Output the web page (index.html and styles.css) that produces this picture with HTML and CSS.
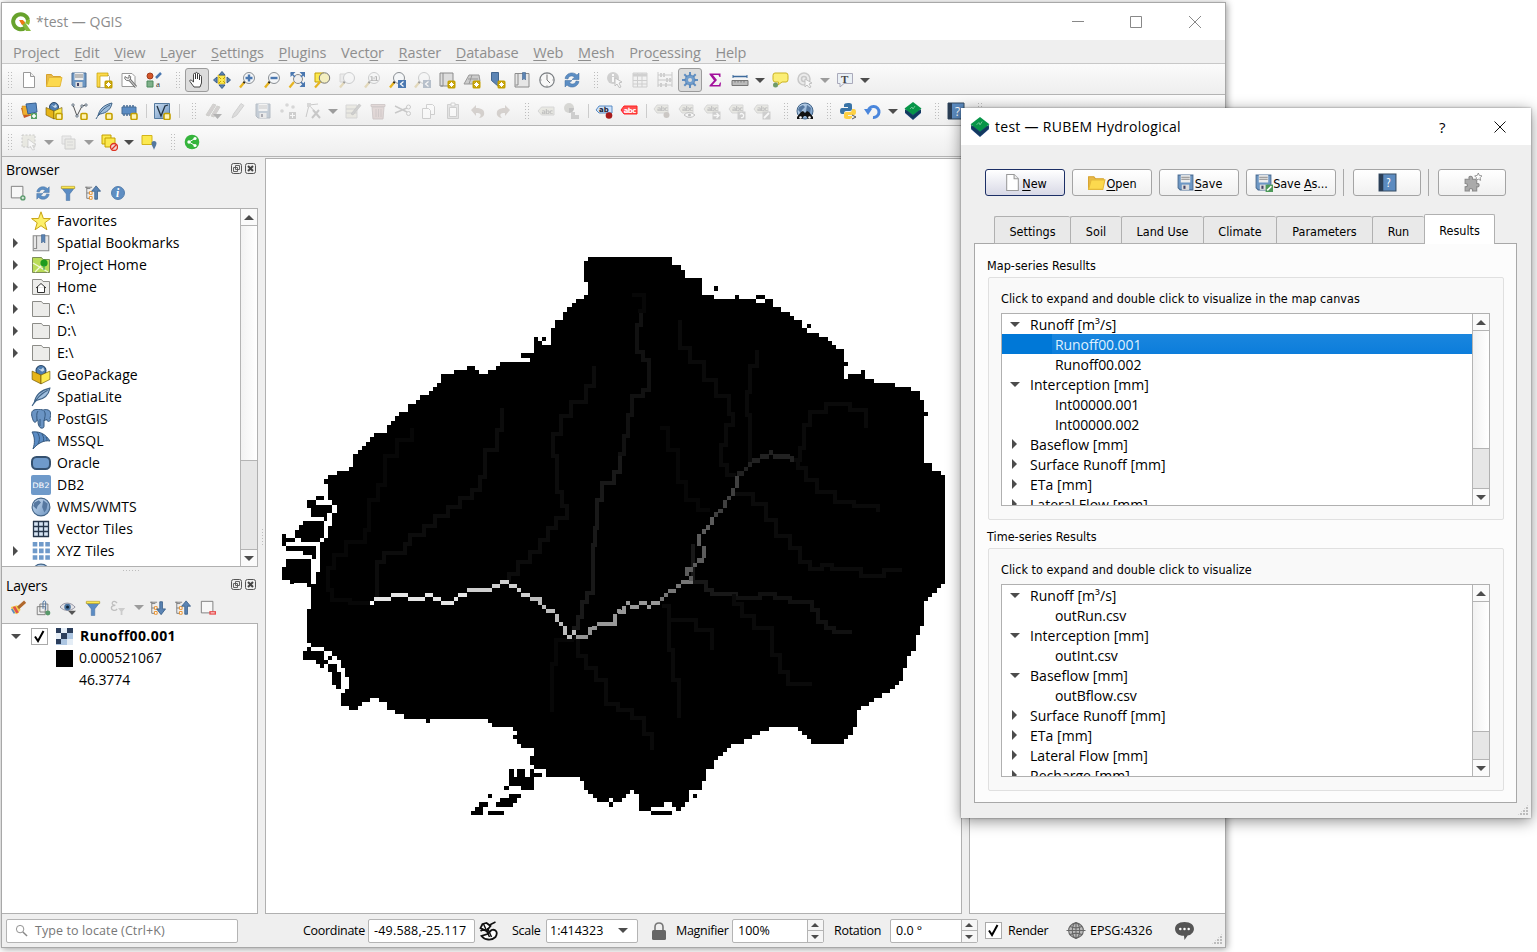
FILE: index.html
```
<!DOCTYPE html>
<html lang="en">
<head>
<meta charset="utf-8">
<title>*test — QGIS</title>
<link rel="stylesheet" href="styles.css">
</head>
<body>
<svg class="defs" aria-hidden="true">
<defs>
<linearGradient id="gl" x1="0" y1="0" x2="1" y2="1"><stop offset="0" stop-color="#c9dcf0"/><stop offset="1" stop-color="#6d94c0"/></linearGradient>
<symbol id="star" viewBox="0 0 18 18"><rect x="9.5" y="9.5" width="8" height="8" rx="1.5" fill="#c4a000"/><path d="M13.5 11v5M11 13.5h5M11.8 11.8l3.4 3.4M15.2 11.8l-3.4 3.4" stroke="#fff" stroke-width="1"/></symbol>
<symbol id="badge" viewBox="0 0 18 18"><rect x="11" y="11.500" width="6" height="6" rx="1.200" fill="#fff3b5" stroke="#c4a000" stroke-width="1.600"/></symbol>
<symbol id="new" viewBox="0 0 18 18"><path d="M3.500 1.500h7l4 4v11h-11z" fill="#fff" stroke="#999"/><path d="M10.500 1.500v4h4" fill="#eee" stroke="#999"/></symbol>
<symbol id="open" viewBox="0 0 18 18"><path d="M1.500 15.500V3.500h5l1.500 2h7.500v3" fill="#e8b94a" stroke="#d6a22c"/><path d="M1.500 15.500L4 6.500h13l-2 9z" fill="#fcd94e" stroke="#e4b93a"/></symbol>
<symbol id="save" viewBox="0 0 18 18"><path d="M2 2h14v14H4l-2-2z" fill="#6d97c4" stroke="#4d6f95"/><path d="M4.500 2h9v7h-9z" fill="#eee"/><path d="M5 4h8M5 6h8" stroke="#888"/><path d="M5.500 11h7v5h-7z" fill="#ddd"/><path d="M7 12h2v3H7z" fill="#446"/></symbol>
<symbol id="layout" viewBox="0 0 18 18"><path d="M2.500 2.500h9l3 3v11h-12z" fill="#fff" stroke="#aaa"/><path d="M2 2h11v3H5v11H2z" fill="#fcd94e" stroke="#c4a000" stroke-width=".7"/><use href="#star"/></symbol>
<symbol id="manager" viewBox="0 0 18 18"><path d="M2 2.500h10l3 3v10H2z" fill="#fff" stroke="#999"/><path d="M9 8l7 8" stroke="#777" stroke-width="2.800"/><path d="M9 8l7 8" stroke="#ddd" stroke-width="1"/><path d="M5 5.500a3 3 0 1 0 4-1.500L9 7H7z" fill="#eee" stroke="#777"/></symbol>
<symbol id="styles" viewBox="0 0 18 18"><circle cx="5" cy="5" r="3" fill="#d4572a" stroke="#a33c1c"/><path d="M11 7l5-5" stroke="#4a78b0" stroke-width="2.500"/><path d="M2 10h6v6H2z" fill="#7fb08a" stroke="#4c8a5c"/><text x="11" y="16" font-size="9" fill="#333" font-family="Liberation Serif">a</text></symbol>
<symbol id="hand" viewBox="0 0 18 18"><path d="M6 16L2 10.500c-.8-1.500.8-2 1.800-1L5.500 11V3.500c0-1.500 2-1.500 2 0V8 2.500c0-1.500 2-1.500 2 0V8 3.500c0-1.500 2-1.300 2 0V9 5.500c0-1.300 2-1.300 2 0V12l-1.500 4z" fill="#fff" stroke="#333" stroke-width=".9"/></symbol>
<symbol id="pansel" viewBox="0 0 18 18"><path d="M5 4h7v9H5z" fill="#fce94f" stroke="#c4a000" stroke-width=".6"/><path d="M9 .5l3 3.500H6zM9 17.500l3-3.500H6zM.5 9L4 6v6zM17.500 9L14 6v6z" fill="#5b84b4" stroke="#3c5f8a" stroke-width="1"/><path d="M6 6l2 2M12 6l-2 2M6 12l2-2M12 12l-2-2" stroke="#c4a000"/></symbol>
<symbol id="lens" viewBox="0 0 18 18"><path d="M6.500 11L2 16.500" stroke="#e6b422" stroke-width="2.400"/><path d="M8 9.500L5.500 12" stroke="#222" stroke-width="2"/><circle cx="11" cy="7" r="5.500" fill="#f4f6f8" stroke="#8a8f94"/></symbol>
<symbol id="zone" viewBox="0 0 18 18"><use href="#lens"/><text x="6.500" y="9.500" font-size="6.500" font-weight="bold" fill="#555" font-family="DejaVu Sans" textLength="9">1:1</text></symbol>
<symbol id="zin" viewBox="0 0 18 18"><use href="#lens"/><path d="M11 3.500v7M7.500 7h7" stroke="#4b78b0" stroke-width="2.400"/></symbol>
<symbol id="zout" viewBox="0 0 18 18"><use href="#lens"/><path d="M7.500 7h7" stroke="#4b78b0" stroke-width="2.400"/></symbol>
<symbol id="zfull" viewBox="0 0 18 18"><path d="M6 11L1.500 16.500" stroke="#e6b422" stroke-width="2.200"/><circle cx="10" cy="8" r="4.500" fill="#eee" stroke="#888"/><path d="M2.500 1h5L2.500 6zM17 1v5.500L11.500 1zM17 16v-5.500L11.500 16z" fill="#4b78b0"/><path d="M3 2l4 4M16.500 2L13 6M16.500 15L13 11" stroke="#4b78b0" stroke-width="1.500" fill="none"/></symbol>
<symbol id="zsel" viewBox="0 0 18 18"><path d="M2 2h9v9H2z" fill="#fce94f" stroke="#c4a000"/><path d="M7 11L2 16.500" stroke="#e6b422" stroke-width="2.200"/><circle cx="11.500" cy="7" r="5.200" fill="#f4efc0" stroke="#777"/></symbol>
<symbol id="zlay" viewBox="0 0 18 18"><path d="M2 3h9v8H2z" fill="#ddd" stroke="#aaa"/><use href="#lens"/></symbol>
<symbol id="zlast" viewBox="0 0 18 18"><use href="#lens"/><path d="M10 9h8v8h-8z" fill="#4b78b0"/><path d="M15.500 10.500L12.500 13l3 2.500" stroke="#fff" stroke-width="1.200" fill="none"/></symbol>
<symbol id="book3" viewBox="0 0 18 18"><path d="M2 2h3v13H2zM5 2h10v13H3" fill="#ddd" stroke="#8c8c8c"/><use href="#star"/></symbol>
<symbol id="v3d" viewBox="0 0 18 18"><path d="M1 13L6 4h10l1 6-5 3z" fill="#ccc" stroke="#999"/><path d="M5 8h10M9 4l-3 9" stroke="#999" fill="none"/><use href="#star"/></symbol>
<symbol id="bmk" viewBox="0 0 18 18"><path d="M3.500 1.500h7v14l-3.500-3-3.500-3z" fill="#5b84b4" stroke="#41658f"/><use href="#star"/></symbol>
<symbol id="bmks" viewBox="0 0 18 18"><path d="M2 2.500h14V16H2z" fill="#e6e6e6" stroke="#8c8c8c"/><path d="M5 2.500V14H2.500" stroke="#8c8c8c" fill="none"/><path d="M9.500 1.500h3V9L11 7.500 9.500 9z" fill="#5b84b4" stroke="#41658f" stroke-width=".6"/></symbol>
<symbol id="clock" viewBox="0 0 18 18"><circle cx="9" cy="9" r="7.200" fill="#f8f8f8" stroke="#7b7f83" stroke-width="1.200"/><path d="M9 4v5l3 3M9 2.500v1M9 14.500v1M2.500 9h1M14.500 9h1" stroke="#777" fill="none"/></symbol>
<symbol id="refresh" viewBox="0 0 18 18"><path d="M2 7.500C3 2 10 0 14 4l2-2v6.500h-7l2.500-2.300C9 4 5.500 5 5 8zM16 10.500C15 16 8 18 4 14l-2 2V9.500h7l-2.500 2.300C9 14 12.500 13 13 10z" fill="#5c8ec4" stroke="#3f6a9c" stroke-width=".5"/></symbol>
<symbol id="info" viewBox="0 0 18 18"><circle cx="9" cy="9" r="7.300" fill="#5f8ec2" stroke="#4a76a8"/><text x="6.800" y="13.500" font-size="13" font-style="italic" font-weight="bold" fill="#fff" font-family="Liberation Serif">i</text></symbol>
<symbol id="ident" viewBox="0 0 18 18"><circle cx="7" cy="7" r="6" fill="#999"/><path d="M7 6v5M7 3v2" stroke="#fff" stroke-width="2"/><path d="M9 7l7 4-3 1 2 4-2 .5-2-3.500-2 2z" fill="#fff" stroke="#777"/></symbol>
<symbol id="action" viewBox="0 0 18 18"><circle cx="8" cy="8" r="6" fill="#ddd" stroke="#888" stroke-width="1.500"/><circle cx="8" cy="8" r="2.500" fill="none" stroke="#888" stroke-width="1.500"/><path d="M9 8l7 4-3 1 2 3-2 .5-2-2.500-2 2z" fill="#fff" stroke="#777"/></symbol>
<symbol id="table" viewBox="0 0 18 18"><path d="M2 2h14v14H2z" fill="#eee" stroke="#999"/><path d="M2 4h14" stroke="#999" stroke-width="3"/><path d="M2 9.500h14M2 13h14M6.500 2v14M11 2v14" stroke="#999"/></symbol>
<symbol id="abacus" viewBox="0 0 18 18"><path d="M2 1v15M16 1v15M2 4h14M2 9h14M2 14h14" stroke="#888"/><path d="M5 2v4M8 2v4M11 7v4M14 7v4M5 12v4M10 12v4" stroke="#999" stroke-width="2"/></symbol>
<symbol id="gear" viewBox="0 0 18 18"><path d="M9 1v16M1 9h16M3.300 3.300l11.400 11.400M14.700 3.300L3.300 14.700" stroke="#5f8ec2" stroke-width="2"/><circle cx="9" cy="9" r="5" fill="#6f9ccc" stroke="#4a76a8" stroke-width=".6"/><circle cx="9" cy="9" r="2" fill="#ddd"/></symbol>
<symbol id="sigma" viewBox="0 0 18 18"><path d="M3.500 2.500h11v3.500h-1l-1-2H7l4 5-4.500 5H13l1-2.500h1l-.5 4h-11v-1L8 9.500 3.500 3.500z" fill="#a3109c"/></symbol>
<symbol id="ruler" viewBox="0 0 18 18"><path d="M2 5.500h14" stroke="#3c6a9c" stroke-width="1.500"/><path d="M2 4v3M16 4v3" stroke="#3c6a9c"/><path d="M1 9.500h16v5H1z" fill="#bbb" stroke="#777"/><path d="M4 9v2.500M7 9v2.500M10 9v2.500M13 9v2.500" stroke="#777"/></symbol>
<symbol id="tip" viewBox="0 0 18 18"><path d="M4 2h11q2 0 2 2.500v4Q17 11 15 11h-4l-4 3 .5-3H4Q2 11 2 8.500v-4Q2 2 4 2z" fill="#fbee76" stroke="#cbb320"/><circle cx="4.500" cy="14" r="2.500" fill="#6f9a68"/></symbol>
<symbol id="textann" viewBox="0 0 18 18"><path d="M1.500 2.500h15v10H8l-4 3.500v-3.500H1.500z" fill="#eaf0f5" stroke="#aab"/><text x="5" y="11.500" font-size="11" font-weight="bold" fill="#444" font-family="Liberation Serif">T</text></symbol>
<symbol id="ds" viewBox="0 0 18 18"><path d="M1 6l10-2 1 9-8 3z" fill="#c95a2c"/><path d="M2 4h8l2 9H3z" fill="#f0b030" stroke="#b97612" stroke-width=".5"/><path d="M6 2l10-1 1 9-9 2z" fill="#5b8cc4" stroke="#375f8f"/><path d="M11 11h6v6h-6z" fill="#58a066"/><path d="M14 12v4M12 14h4" stroke="#fff" stroke-width="1.500"/></symbol>
<symbol id="gpkg" viewBox="0 0 18 18"><circle cx="9" cy="5" r="4.500" fill="#4e7db0" stroke="#2c4a6b"/><path d="M6 3l3 1 2-2 1 3-2 1" fill="#c5d8ea"/><path d="M1 5.500l8 3.500v8l-8-4z" fill="#e6b417" stroke="#6d5508" stroke-width=".6"/><path d="M17 5.500L9 9v8l8-4z" fill="#fce94f" stroke="#6d5508" stroke-width=".6"/></symbol>
<symbol id="gpkgn" viewBox="0 0 18 18"><use href="#gpkg"/><use href="#badge"/></symbol>
<symbol id="shp" viewBox="0 0 18 18"><path d="M3 3l4 11L12 4l4-1" stroke="#555" fill="none"/><path d="M2 2h2v2H2zM6 13h2v2H6zM11 3h2v2h-2zM15 2h2v2h-2z" fill="#fff" stroke="#456" stroke-width=".7"/><use href="#badge"/></symbol>
<symbol id="feather" viewBox="0 0 18 18"><path d="M3 14C4 8 8 3 17 1c-1 6-5 10-12 11z" fill="#9fbedd" stroke="#3f6387"/><path d="M1 17C5 10 9 6 15 3" stroke="#3f6387" fill="none"/></symbol>
<symbol id="feathern" viewBox="0 0 18 18"><use href="#feather"/><use href="#badge"/></symbol>
<symbol id="mem" viewBox="0 0 18 18"><path d="M4 3v11M7 3v11M10 3v11M13 3v11" stroke="#446a94" stroke-width="1.500"/><path d="M2 5h14v7H2z" fill="#5b8cc4" stroke="#446a94"/><use href="#badge"/></symbol>
<symbol id="virt" viewBox="0 0 18 18"><path d="M1.500 1.500h15v15h-15z" fill="url(#gl)" stroke="#557a9f"/><path d="M4 4l4 10 4-10 3-1" stroke="#234" fill="none" stroke-width="1.300"/><use href="#badge"/></symbol>
<symbol id="pencil" viewBox="0 0 18 18"><path d="M3 16l1.500-4L12 1.500l3 2-7.500 10z" fill="#bbb" stroke="#999"/></symbol>
<symbol id="pencils" viewBox="0 0 18 18"><path d="M2 13L9 2l3 1-7 11z M7 14L13 4l3 1-6 10z" fill="#a99" stroke="#998"/><path d="M9 12h9l-4.500 5z" fill="#555"/></symbol>
<symbol id="pts" viewBox="0 0 18 18"><circle cx="3" cy="9" r="1.800" fill="#aaa"/><circle cx="8" cy="3" r="1.800" fill="#aaa"/><circle cx="14" cy="5" r="1.800" fill="#aaa"/><path d="M10 10h7v7h-7z" fill="#999"/><path d="M13.500 11v5M11 13.500h5" stroke="#fff"/></symbol>
<symbol id="vertex" viewBox="0 0 18 18"><path d="M2 15L5 3l9-1M5 3l9 10" stroke="#888" fill="none"/><path d="M3 1h4v4H3z" fill="#aaa"/><path d="M8 16l7-8M9 8l7 8" stroke="#888" stroke-width="2"/></symbol>
<symbol id="attr" viewBox="0 0 18 18"><path d="M2 3h11v13H2z" fill="#dcd9b8" stroke="#aaa"/><path d="M2 7h11M2 11h11" stroke="#999"/><path d="M7 12L15 2l2 1.500L9 13z" fill="#999" stroke="#777" stroke-width=".6"/></symbol>
<symbol id="trash" viewBox="0 0 18 18"><path d="M3 5h12l-1 12H4zM2 2.500h14v2H2z" fill="#d9a8a4" stroke="#a88"/><path d="M7 7v8M9.500 7v8M12 7v8" stroke="#a88"/></symbol>
<symbol id="cut" viewBox="0 0 18 18"><path d="M1 4l12 6M1 11l12-5" stroke="#888" stroke-width="1.400"/><circle cx="14.500" cy="5" r="2" fill="none" stroke="#888"/><circle cx="14.500" cy="11.500" r="2" fill="none" stroke="#888"/></symbol>
<symbol id="copy" viewBox="0 0 18 18"><path d="M7.500 2.500h6l2 2v8h-8z" fill="#fff" stroke="#999"/><path d="M3.500 6.500h6l2 2v8h-8z" fill="#fff" stroke="#999"/></symbol>
<symbol id="paste" viewBox="0 0 18 18"><path d="M3.500 2.500h11v14h-11z" fill="#ccc" stroke="#999"/><path d="M5.500 5.500h7v9h-7zM7 1h4v3H7z" fill="#fff" stroke="#999"/></symbol>
<symbol id="undo" viewBox="0 0 18 18"><path d="M2 8l5-5v3c6 0 9 2 8 7-1 2-3 3-5 3 3-3 2-5-3-5v3z" fill="#b09c8c"/></symbol>
<symbol id="lab" viewBox="0 0 18 18"><path d="M1 9l3.500-4H17v8H4.500z" fill="#d6d6bc" stroke="#aaa"/><text x="4.500" y="11.500" font-size="6.500" font-weight="bold" fill="#777" font-family="DejaVu Sans" textLength="11.500">abc</text></symbol>
<symbol id="labx" viewBox="0 0 18 18"><path d="M1 7l3-4h11v8H4z" fill="#d6d6bc" stroke="#aaa"/><text x="4" y="9" font-size="6.500" font-weight="bold" fill="#777" font-family="DejaVu Sans" textLength="11">abc</text></symbol>
<symbol id="labpin" viewBox="0 0 18 18"><use href="#labx"/><circle cx="13.500" cy="13" r="3" fill="#987"/></symbol>
<symbol id="labeye" viewBox="0 0 18 18"><use href="#labx"/><path d="M6 13q5-5 11 0-5 5-11 0z" fill="#fff" stroke="#777"/><circle cx="11.500" cy="13" r="1.500" fill="#777"/></symbol>
<symbol id="labmove" viewBox="0 0 18 18"><use href="#labx"/><path d="M9.500 9.500h8v8h-8z" fill="#999"/><path d="M10.500 13.500h5M13.500 11l2.500 2.500-2.500 2.500" fill="none" stroke="#fff" stroke-width="1.300"/></symbol>
<symbol id="labrot" viewBox="0 0 18 18"><use href="#labx"/><path d="M9.500 9.500h8v8h-8z" fill="#999"/><path d="M12 12.500a2 2 0 1 1 1 3" fill="none" stroke="#fff" stroke-width="1.300"/></symbol>
<symbol id="labedit" viewBox="0 0 18 18"><use href="#labx"/><path d="M9.500 9.500h8v8h-8z" fill="#999"/><path d="M11 16l5-5" stroke="#fff" stroke-width="1.800"/></symbol>
<symbol id="dia" viewBox="0 0 18 18"><circle cx="7" cy="6" r="5" fill="#a9a99c"/><path d="M7 6h5a5 5 0 0 1-5 5z" fill="#777"/><path d="M9 10h4v3h4v4H9z" fill="#999"/></symbol>
<symbol id="labb" viewBox="0 0 18 18"><path d="M1 8l3-4h13v7H4z" fill="#cfe3fa" stroke="#5b8cc4"/><text x="4" y="10" font-size="7" font-weight="bold" fill="#223" font-family="DejaVu Sans">ab</text><circle cx="14" cy="13.500" r="3.300" fill="#a81c1c"/></symbol>
<symbol id="labr" viewBox="0 0 18 18"><path d="M1 8l3-4h13v8H4z" fill="#ff5050" stroke="#f22"/><text x="3.800" y="10.500" font-size="7" font-weight="bold" fill="#fff" font-family="DejaVu Sans" textLength="12.500">abc</text></symbol>
<symbol id="globe" viewBox="0 0 18 18"><circle cx="9" cy="9" r="8" fill="url(#gl)" stroke="#426488"/><path d="M3 5l4-2 2 2-3 3-1 3-3-3zM11 3l4 3-1 5-2 3-2-5z" fill="#5678a0"/></symbol>
<symbol id="meta" viewBox="0 0 18 18"><use href="#globe"/><path d="M5 10l2-1 2 2 2-2 2 1 4 5v2h-5l-2-3h-2l-2 3H1v-2z" fill="#111"/><circle cx="4.500" cy="15.500" r="1.300" fill="#fff"/><circle cx="13.500" cy="15.500" r="1.300" fill="#fff"/></symbol>
<symbol id="py" viewBox="0 0 18 18"><path d="M9 1c4 0 4 1 4 3v3q0 2-2 2H7q-2 0-2 3H3Q1 12 1 9t2-3h6V5H5V3q0-2 4-2z" fill="#3873a6"/><path d="M9 17c-4 0-4-1-4-3v-2q0-2 2-2h4q2 0 2-3h2q2 0 2 3t-2 3H9v1h4v1q0 2-4 2z" fill="#fdd045"/><path d="M13 13l4 2-4 2" stroke="#555" fill="none"/></symbol>
<symbol id="reload" viewBox="0 0 18 18"><path d="M4 10a5.500 5.500 0 1 1 5 5.500" stroke="#4a86dc" stroke-width="3" fill="none"/><path d="M0 7l8 0-4 6z" fill="#4a86dc"/></symbol>
<symbol id="rubem" viewBox="0 0 18 18"><path d="M1 9l8-4 8 4v2l-8 7-8-7z" fill="#1c3f78"/><path d="M1 7l8 7 8-7v3l-8 7-8-7z" fill="#123a5c"/><path d="M9 0l8.500 6.500L9 13 .5 6.500z" fill="#079548"/><path d="M6 7l2-2 1 2 2-3" stroke="#7fcb9f" fill="none" stroke-width=".8"/></symbol>
<symbol id="help" viewBox="0 0 18 18"><path d="M1 1h16v16H1z" fill="#5c8bc0" stroke="#334a63"/><path d="M1 1h4v16H1z" fill="#2b3e55"/><text x="8" y="13.500" font-size="12" fill="#fff" font-family="Open Sans">?</text></symbol>
<symbol id="selrect" viewBox="0 0 18 18"><path d="M2 2h13v12H2z" fill="#d9d9b9" stroke="#888" stroke-dasharray="2 1.500"/><path d="M8 6l8 6-3.500.5 2 4-2 .5-2-3.500L8 15z" fill="#fff" stroke="#888" stroke-width=".7"/></symbol>
<symbol id="selval" viewBox="0 0 18 18"><path d="M2 3h9v8H2z" fill="#ddd" stroke="#aaa"/><path d="M5 6h10v10H5z" fill="#ddddc8" stroke="#999"/><path d="M7 9h6M7 12h6" stroke="#aaa"/></symbol>
<symbol id="desel" viewBox="0 0 18 18"><path d="M2 2h9v9H2z" fill="#fce94f" stroke="#c4a000"/><path d="M5 5h10v9H5z" fill="#fce94f" stroke="#c4a000"/><circle cx="14" cy="14" r="3.500" fill="#f3d5d5" stroke="#d32" stroke-width="1.300"/><path d="M11.500 16.500l5-5" stroke="#d32" stroke-width="1.300"/></symbol>
<symbol id="selloc" viewBox="0 0 18 18"><path d="M2 2.500h10v9H2z" fill="#fce94f" stroke="#d3b41a"/><path d="M11.500 10.500a2.500 2.500 0 0 1 5 0c0 2-2.500 5-2.500 6.500 0-1.500-2.500-4.500-2.500-6.500z" fill="#54789f"/></symbol>
<symbol id="share" viewBox="0 0 18 18"><circle cx="9" cy="9" r="7.300" fill="#35b43c"/><path d="M12 5.500L6 9l6 3.500" stroke="#fff" fill="none"/><circle cx="6" cy="9" r="1.700" fill="#fff"/><circle cx="12" cy="5.500" r="1.600" fill="#fff"/><circle cx="12" cy="12.500" r="1.600" fill="#fff"/></symbol>
<symbol id="addl" viewBox="0 0 18 18"><path d="M1.500 1.500h13v13h-13z" fill="#f7f7f7" stroke="#777"/><circle cx="14.500" cy="14.500" r="3" fill="#58996a"/><path d="M14.500 13v3M13 14.500h3" stroke="#fff"/></symbol>
<symbol id="reml" viewBox="0 0 18 18"><path d="M1.500 1.500h13v13h-13z" fill="#f7f7f7" stroke="#777"/><path d="M10.500 12.500h7.500v4h-7.500z" fill="#e84c4c"/><path d="M12 14.500h4.500" stroke="#fff"/></symbol>
<symbol id="filter" viewBox="0 0 18 18"><path d="M1.500 3h15l-5.500 7v7.500H7V10z" fill="#5b8cc4" stroke="#456f9f" stroke-width=".6"/><path d="M1.500 1.500h15v2.500h-15z" fill="#fce94f" stroke="#b39a20" stroke-width=".7"/></symbol>
<symbol id="up" viewBox="0 0 18 18"><path d="M2 2v13h4M2 4h4M2 9h4M0 2.500h8" stroke="#777" fill="none"/><path d="M5 7.500h3v3H5zM5 13h3v3H5z" fill="#fff" stroke="#e88a1c"/><path d="M12.500 1l5 6H14v9h-3V7H7.500z" fill="#5b84b4" stroke="#345a85" stroke-width=".9"/></symbol>
<symbol id="down" viewBox="0 0 18 18"><path d="M2 2v13h4M2 4h4M2 9h4M0 2.500h8" stroke="#777" fill="none"/><path d="M5 7.500h3v3H5zM5 13h3v3H5z" fill="#fff" stroke="#e88a1c"/><path d="M12.500 16.500l5-6.500H14V2h-3v8H7.500z" fill="#5b84b4" stroke="#345a85" stroke-width=".9"/></symbol>
<symbol id="eps" viewBox="0 0 18 18"><path d="M8 3.500C5-.5 1 2.500 3 5q1 1.200 3 1-4 0-4.500 2.500C1.500 12.500 6.500 12.500 8 10" fill="none" stroke="#777" stroke-width="1.400"/><path d="M9 9h8l-3 4v4h-2v-4z" fill="#999"/></symbol>
<symbol id="fav" viewBox="0 0 20 20"><path d="M10 .8l2.400 6.700 7 .1-5.600 4.200 2.100 7L10 14.700l-5.900 4.100 2.100-7L.6 7.600l7-.1z" fill="#fdf06a" stroke="#c9a414"/></symbol>
<symbol id="folder" viewBox="0 0 20 20"><path d="M1.500 17.500V2.500h9l1.500 2h6.500v13z" fill="#ececea" stroke="#8c8c88"/></symbol>
<symbol id="phome" viewBox="0 0 20 20"><path d="M1.500 17.500V2.500h9l1.500 2h6.500v13z" fill="#b9dc58" stroke="#7c8c58"/><path d="M2 8l15 9M4 17L14 7" stroke="#f2f7dc" stroke-width="1.300"/><circle cx="13" cy="8" r="3.600" fill="#1e9c1e"/><path d="M13 10v5" stroke="#295"/></symbol>
<symbol id="home" viewBox="0 0 20 20"><use href="#folder"/><path d="M5 11l5-4.500 5 4.500M6.500 10v5.500h7V10" fill="#fff" stroke="#333"/></symbol>
<symbol id="pg" viewBox="0 0 20 20"><path d="M3 1C0 2 0 6 2 11c1 3 3 3 4 0l1 .5c0 2 0 5 2 7 1 1 4 1 4-1v-6l3-1c0 3 3 2 4 0l-1-1c1-4 1-8-2-8.500C15 0 13 1 12 1 9 0 5 0 3 1z" fill="#6a94c4" stroke="#35587e"/><path d="M7 2C5 4 6 9 6 11M13 2c2 2 1 6 0 10M9 10v7" stroke="#35587e" fill="none"/></symbol>
<symbol id="ms" viewBox="0 0 20 20"><path d="M1 1c9-1 14 3 18 9-6-1-12 2-17 8 2-6 2-12-1-17z" fill="#5b8cc4" stroke="#35587e"/><path d="M6 1c3 4 3 8 1 12M11 3c2 3 2 6 1 8M15 6c1 2 1 3 1 4" stroke="#35587e" fill="none"/></symbol>
<symbol id="ora" viewBox="0 0 20 20"><rect x="1" y="4" width="18" height="12" rx="4.500" fill="#6f9aca" stroke="#35516f" stroke-width="2"/></symbol>
<symbol id="db2" viewBox="0 0 20 20"><rect width="20" height="20" rx="2" fill="#6f9aca"/><text x="1.200" y="12.500" font-size="7.500" fill="#fff" font-family="DejaVu Sans" textLength="17.500" lengthAdjust="spacingAndGlyphs">DB2</text></symbol>
<symbol id="vt" viewBox="0 0 20 20"><path d="M2 2h16v16H2z" fill="#d5e3f2"/><path d="M2 2.500h16M2 7.500h16M2 12.500h16M2 17.500h16M2.500 2v16M7.500 2v16M12.500 2v16M17.500 2v16" stroke="#26364a" stroke-width="1.300"/></symbol>
<symbol id="xyz" viewBox="0 0 20 20"><path d="M4 1v18M10.300 1v18M16.600 1v18" stroke="#6f9aca" stroke-width="4.600" stroke-dasharray="4.600 2"/></symbol>
<symbol id="float" viewBox="0 0 11 11"><rect x=".5" y=".5" width="10" height="10" rx="2" fill="#eee" stroke="#555"/><path d="M4.500 2.500h4v4h-4zM2.500 4.500h4v4h-4z" fill="#eee" stroke="#555" stroke-width=".9"/></symbol>
<symbol id="x" viewBox="0 0 11 11"><rect x=".5" y=".5" width="10" height="10" rx="2" fill="#eee" stroke="#555"/><path d="M3 3l5 5M8 3l-5 5" stroke="#444" stroke-width="2"/></symbol>
<symbol id="brush" viewBox="0 0 18 18"><path d="M1 8l7-2 4 5-4 5c-3 0-6-3-7-8z" fill="#f5d04a"/><path d="M3 8l4 7 3-1-4-7z" fill="#e05050"/><path d="M2 10l3 5" stroke="#5b8cc4" stroke-width="2"/><path d="M9 9l8-7" stroke="#b0682c" stroke-width="3.500"/></symbol>
<symbol id="grp" viewBox="0 0 18 18"><path d="M2.500 7.500h9v9h-9zM5.500 4.500h9v9h-9z" fill="#eee" stroke="#777"/><path d="M9 10V2q1.500-2 3 0v9" fill="none" stroke="#456f9f"/><circle cx="14.500" cy="14.500" r="2.800" fill="#58996a"/></symbol>
<symbol id="eye" viewBox="0 0 18 18"><path d="M0 8C4 2 12 2 17 8 12 13 5 13 0 8z" fill="#e3e3e6" stroke="#889"/><circle cx="8.500" cy="8" r="3.700" fill="#49739f"/><circle cx="8.500" cy="8" r="1.700" fill="#123"/><path d="M9 12h9l-4.500 5z" fill="#555"/></symbol>
<symbol id="puzzle" viewBox="0 0 18 18"><path d="M2 6h4c-2-4 4-4 3 0h4v4c3-1 3 4 0 3v4H9c1-3-4-3-3 0H2v-4c3 0 3-3 0-3z" fill="#aaa" stroke="#888"/><path d="M14.500 0l1 2.300 2.500.4-1.800 1.800.5 2.500-2.200-1.200-2.200 1.200.5-2.500L11 2.700l2.500-.4z" fill="#fff" stroke="#888" stroke-width=".8"/></symbol>
<symbol id="tick" viewBox="0 0 15 15"><path d="M3 7.500l3 4.500 5.500-10" fill="none" stroke="#000" stroke-width="2"/></symbol>
</defs>
</svg>

<div class="window main">
  <header class="title"><svg class="logo" viewBox="0 0 20 20"><path d="M15 15A7.500 7.500 0 1 1 17 8" fill="none" stroke="#67a22c" stroke-width="4"/><path d="M17 8a7.500 7.500 0 0 1-1 4" fill="none" stroke="#8cbf2f" stroke-width="4"/><path d="M9 9l4 0 7 10h-5z" fill="#84b83a"/><path d="M8 8h4l2 3-3 2z" fill="#ee7913"/></svg><span>*test — QGIS</span>
    <svg class="winbtns" viewBox="0 0 132 14"><path d="M2 6.500h12M60.500 1.500h11v11h-11zM119 1l12 12M131 1l-12 12" fill="none" stroke="#888"/></svg></header>
  <nav class="menu"><span>Pro<u>j</u>ect</span><span><u>E</u>dit</span><span><u>V</u>iew</span><span><u>L</u>ayer</span><span><u>S</u>ettings</span><span><u>P</u>lugins</span><span>Vect<u>o</u>r</span><span><u>R</u>aster</span><span><u>D</u>atabase</span><span><u>W</u>eb</span><span><u>M</u>esh</span><span>Pro<u>c</u>essing</span><span><u>H</u>elp</span></nav>
  <div class="bar"><i class="grip first"></i><svg><use href="#new"/></svg><svg><use href="#open"/></svg><svg><use href="#save"/></svg><svg><use href="#layout"/></svg><svg><use href="#manager"/></svg><svg><use href="#styles"/></svg><i class="grip"></i><svg class="on"><use href="#hand"/></svg><svg><use href="#pansel"/></svg><svg><use href="#zin"/></svg><svg><use href="#zout"/></svg><svg><use href="#zfull"/></svg><svg><use href="#zsel"/></svg><svg class="off"><use href="#zlay"/></svg><svg class="off"><use href="#zone"/></svg><svg><use href="#zlast"/></svg><svg class="off"><use href="#zlast"/></svg><svg><use href="#book3"/></svg><svg><use href="#v3d"/></svg><svg><use href="#bmk"/></svg><svg><use href="#bmks"/></svg><svg><use href="#clock"/></svg><svg><use href="#refresh"/></svg><i class="grip"></i><svg class="off"><use href="#ident"/></svg><svg class="off"><use href="#table"/></svg><svg class="off"><use href="#abacus"/></svg><svg class="on"><use href="#gear"/></svg><svg><use href="#sigma"/></svg><svg><use href="#ruler"/></svg><i class="arr"></i><svg><use href="#tip"/></svg><svg class="off"><use href="#action"/></svg><i class="arr dim"></i><svg><use href="#textann"/></svg><i class="arr"></i></div>
  <div class="bar"><i class="grip first"></i><svg><use href="#ds"/></svg><svg><use href="#gpkgn"/></svg><svg><use href="#shp"/></svg><svg><use href="#feathern"/></svg><svg><use href="#mem"/></svg><i class="sep"></i><svg><use href="#virt"/></svg><i class="sep"></i><i class="grip"></i><svg class="off"><use href="#pencils"/></svg><svg class="off"><use href="#pencil"/></svg><svg class="off"><use href="#save"/></svg><svg class="off"><use href="#pts"/></svg><svg class="off"><use href="#vertex"/></svg><i class="arr dim"></i><svg class="off"><use href="#attr"/></svg><svg class="off"><use href="#trash"/></svg><svg class="off"><use href="#cut"/></svg><svg class="off"><use href="#copy"/></svg><svg class="off"><use href="#paste"/></svg><svg class="off"><use href="#undo"/></svg><svg class="off flip"><use href="#undo"/></svg><i class="grip"></i><svg class="off"><use href="#lab"/></svg><svg class="off"><use href="#dia"/></svg><i class="sep"></i><svg><use href="#labb"/></svg><svg><use href="#labr"/></svg><i class="sep"></i><svg class="off"><use href="#labpin"/></svg><svg class="off"><use href="#labeye"/></svg><svg class="off"><use href="#labmove"/></svg><svg class="off"><use href="#labrot"/></svg><svg class="off"><use href="#labedit"/></svg><i class="grip"></i><svg><use href="#meta"/></svg><i class="grip"></i><svg><use href="#py"/></svg><svg><use href="#reload"/></svg><i class="arr"></i><svg><use href="#rubem"/></svg><i class="grip"></i><svg><use href="#help"/></svg><i class="grip"></i></div>
  <div class="bar"><i class="grip first"></i><svg class="off"><use href="#selrect"/></svg><i class="arr dim"></i><svg class="off"><use href="#selval"/></svg><i class="arr dim"></i><svg><use href="#desel"/></svg><i class="arr"></i><svg><use href="#selloc"/></svg><i class="grip"></i><svg><use href="#share"/></svg></div>

  <div class="work">
    <aside class="dock">
      <div class="dockhead"><span>Browser</span><svg><use href="#float"/></svg><svg><use href="#x"/></svg></div>
      <div class="tools"><svg><use href="#addl"/></svg><svg><use href="#refresh"/></svg><svg><use href="#filter"/></svg><svg><use href="#up"/></svg><svg><use href="#info"/></svg></div>
      <div class="browser">
        <ul>
          <li><b></b><svg><use href="#fav"/></svg>Favorites</li>
          <li><b class="c"></b><svg><use href="#bmks"/></svg>Spatial Bookmarks</li>
          <li><b class="c"></b><svg><use href="#phome"/></svg>Project Home</li>
          <li><b class="c"></b><svg><use href="#home"/></svg>Home</li>
          <li><b class="c"></b><svg><use href="#folder"/></svg>C:\</li>
          <li><b class="c"></b><svg><use href="#folder"/></svg>D:\</li>
          <li><b class="c"></b><svg><use href="#folder"/></svg>E:\</li>
          <li><b></b><svg><use href="#gpkg"/></svg>GeoPackage</li>
          <li><b></b><svg><use href="#feather"/></svg>SpatiaLite</li>
          <li><b></b><svg><use href="#pg"/></svg>PostGIS</li>
          <li><b></b><svg><use href="#ms"/></svg>MSSQL</li>
          <li><b></b><svg><use href="#ora"/></svg>Oracle</li>
          <li><b></b><svg><use href="#db2"/></svg>DB2</li>
          <li><b></b><svg><use href="#globe"/></svg>WMS/WMTS</li>
          <li><b></b><svg><use href="#vt"/></svg>Vector Tiles</li>
          <li><b class="c"></b><svg><use href="#xyz"/></svg>XYZ Tiles</li>
          <li><b></b><svg><use href="#globe"/></svg></li>
        </ul>
        <div class="scroll s1"><i class="up"></i><i class="handle"></i><i class="track"></i><i class="down"></i></div>
      </div>
      <div class="split"></div>
      <div class="dockhead"><span>Layers</span><svg><use href="#float"/></svg><svg><use href="#x"/></svg></div>
      <div class="tools layertools"><svg><use href="#brush"/></svg><svg><use href="#grp"/></svg><svg><use href="#eye"/></svg><svg><use href="#filter"/></svg><svg class="off"><use href="#eps"/></svg><i class="arr dim"></i><svg><use href="#down"/></svg><svg><use href="#up"/></svg><svg><use href="#reml"/></svg></div>
      <div class="layers">
        <div class="layer"><b class="e"></b><span class="check"><svg><use href="#tick"/></svg></span><svg class="raster" viewBox="0 0 17 17"><path fill="#adc6e2" d="M0 0h17v17H0z"/><path fill="#2b3e5c" d="M0 0h5v5H0zM11 0h6v5h-6zM5 5h6v6H5zM0 11h5v5H0z"/><path fill="#e4edf6" d="M5 0h6v5H5zM0 5h5v6H0zM11 11h6v6h-6z"/></svg><strong>Runoff00.001</strong></div>
        <div class="legend"><i></i>0.000521067</div>
        <div class="legend"><i class="none"></i>46.3774</div>
      </div>
    </aside>
    <div class="gutter"></div>
    <main class="canvas">
      <svg class="map" viewBox="266 159 695 754" shape-rendering="crispEdges">
        <path d="M588 257H672V265H681V270H685V278H702V295H714V299H773V307H781V312H790V316H794V320H802V328H807V333H819V337H828V341H832V345H836V349H844V379H848V374H861V370H865V379H874V383H895V387H911V391H920V400H924V463H932V471H941V475H945V584H941V588H937V593H932V597H928V601H924V626H920V635H916V651H911V656H907V668H903V681H899V685H895V689H890V693H882V698H874V702H869V706H861V710H857V727H853V735H848V739H844V744H811V739H807V735H802V731H798V727H769V731H760V735H752V739H744V744H731V748H727V752H723V756H718V760H714V769H706V781H702V790H689V802H685V807H681V811H676V807H672V802H664V807H651V811H639V794H634V790H630V794H626V798H622V802H597V798H593V794H588V790H584V781H580V777H546V769H534V765H530V756H534V748H521V744H517V739H513V735H517V731H513V727H492V723H488V719H404V714H395V710H387V702H379V698H370V702H362V706H358V710H349V706H341V693H345V689H349V677H345V668H341V660H337V656H332V651H324V647H311V643H307V609H311V584H316V572H320V542H324V538H328V526H332V513H337V505H332V500H328V484H324V479H328V475H337V471H349V467H353V454H358V450H362V446H366V442H370V437H374V433H387V425H391V421H395V416H399V412H408V404H416V400H420V395H429V391H433V387H437V383H441V374H454V370H467V366H475V370H479V374H488V370H496V366H500V362H530V358H521V353H534V337H538V341H542V345H551V328H555V320H563V312H567V307H572V303H576V299H584V295H588V282H584V261H588Z"/>
        <path d="M714 286h4v5h-4zM735 295h4v4h-4zM756 295h9v4h-9zM807 324h4v4h-4zM844 362h4v4h-4zM924 412h4v4h-4zM542 337h4v4h-4zM316 496h8v4h-8zM307 500h9v5h16v8h-5v8h-3v-4h-13v-9h-4zM303 521h21v17h-4v4h-19v-4h-6v-8h4v-5h4zM282 534h4v4h9v4h-9v4h-4zM286 546h30v13h-4v-4h-9v-4h-17zM286 559h25v28h-4v-4h-13v1h-4v-4h-8v-13h4zM307 647h4v4h13v9h4v4h-4v4h-4v-4h-4v-4h-13v-9h4zM328 656h4v4h-4zM328 664h9v8h4v17h-5v-4h-4v-13h-4zM509 769h5v8h-5zM517 769h8v8h9v13h-13v-4h-12v4h-5v-4h5v-9h8zM530 769h4v4h8v4h-12zM509 794h12v4h-4v5h-4v4h-17v-5h4v-4h9zM488 794h4v4h-4zM479 802h9v5h-5v8h-12v-4h4v-4h4zM488 811h16v4h-16zM609 802h4v5h-4zM693 794h4v4h-4zM651 811h21v4h-21z"/>
        <path fill="#fff" d="M756 299h9v4h-9zM513 731h4v4h-4zM664 807h4v4h-4zM651 807h13v4h-13zM609 798h4v4h-4z"/><path d="M426 719h4v4h-4z"/>
        <g fill="none" stroke="#0c0c0c" stroke-width="4">
          <path stroke="#191919" d="M574 634V628H578V617H582V602H587V593H593V545H595V528H597V500H602V483H614V472H620V454"/>
          <path stroke="#111" d="M620 456V454H624V436H628V415H632V396H643V390H649V360H643V352H637V325H641V311"/>
          <path stroke="#181818" d="M693 582V544V582H706V590H712V594H736V598"/>
          <path stroke="#111" d="M736 598H760V594H775V598H790V602H812V610H818V622H826V628H834V632H852"/>
          <path d="M509 582V574H518V562H530V552H540V540H548V528H556V518H567V506H562V492H557V456H553V434H561V416H571V402H586V386H594V366"/>
          <path d="M377 600V562H384V553H405V544H410V535H424V526H435V516H448V507H460V498H472V490H480V477H485V450H497V430H502V408"/>
          <path stroke="#070707" d="M372 603H350V600H332V590H328V568H334V555H346V542H365V530H369V500H378V485H385V456H397V440H412V428M638 311H644V295H632M710 510H698V500H686V482H678V450H668V428H660M574 640H556V664H552V712"/>
          <path stroke="#0a0a0a" d="M736 475H727V465H721V445H726V425H733V414H729V396H716V380H704V362H690V348H680V320M754 461H750V415H747V392H750V366H757V350M792 460H800V448H804V425H810V412H826V404H850V410H866V428M792 460H798V468H806V480H817V492H835V502H854V506H878V512"/>
          <path stroke="#0b0b0b" d="M734 494H753V504H766V520H776V536H790V548H800V562H810V569H822V565H832V569H861V576H884V570H902"/>
          <path stroke="#0a0a0a" d="M734 594V604H742V616H754V628H772V655H780V672H788V684H812M662 606H669V650H673V680H679V718M669 610V620H696V630H712V650M574 638H578V656H586V668H596V680H606V704H618V710H632V718H644V734H652V750"/>
        </g>
        <g fill="none" stroke-width="12" transform="translate(270 530) scale(.33333)">
          <path stroke="#fff" d="M300 219h12"/>
          <path stroke="#e6e6e6" d="M312 207h51M363 195h51M414 207h51M465 195h24M489 207h24M513 219h39M552 207h12M564 195h27"/>
          <path stroke="#cecece" d="M591 181h75M666 168h24M690 156h27M717 168h24M741 181h12M753 195h27"/>
          <path stroke="#bcbcbc" d="M780 207h36M810 213v12M816 231h12M828 244h27M861 252v24M867 282h12M885 288v27M891 321h15M912 300v15"/>
          <path stroke="#949494" d="M918 321h36M960 291v24M966 294h15M981 282h48M1035 252v24M1041 244h12"/>
        </g>
        <g fill="none" stroke-width="12" transform="translate(600 240) scale(.33333 .37637)">
          <path stroke="#989898" d="M0 1020h39M46 994v31M54 988h24M72 972v12M78 964h12M90 975h27M117 964h24M141 975h12M153 964h27"/>
          <path stroke="#777" d="M180 954h12M192 943h12M204 932h24M228 919h15M243 909h36"/>
          <path stroke="#5c5c5c" d="M273 893v12M261 870v22M267 875h12M279 863h12M291 852h21M312 814v32M298 782v30M306 775h12M318 764h12M336 736v22"/>
          <path stroke="#404040" d="M342 730h12M354 720h15M375 691v22M381 685h12M399 659v22M411 627v32"/>
          <path stroke="#222" d="M411 620h21M432 608h12M444 597h12M456 586h24M480 575h27M513 559v12M519 575h51M576 575v16"/>
        </g>
      </svg>
    </main>
    <div class="gutter g2"></div>
    <aside class="rightdock"></aside>
  </div>

  <footer class="status">
    <div class="locate"><svg viewBox="0 0 14 14"><circle cx="5.500" cy="5.500" r="4" fill="none" stroke="#888"/><path d="M8.500 8.500L13 13" stroke="#888" stroke-width="1.500"/></svg>Type to locate (Ctrl+K)</div>
    <span class="t1">Coordinate</span><div class="field coord">-49.588,-25.117</div>
    <svg class="track-ic" viewBox="0 0 18 20"><path d="M3 3l4-1 4 3-4 5-6-3zM1 10c3-2 6-1 7 1M2 15c3 4 10 5 14 1 3-5 0-8-4-7l-4 4z" fill="#fff" stroke="#111" stroke-width="1.800"/><path d="M10 4l6-3M4 3l6 13M8 7l4 9" stroke="#111" stroke-width="1.500"/></svg>
    <span class="t2">Scale</span><div class="field combo">1:414323<i></i></div>
    <svg class="lock" viewBox="0 0 16 20"><path d="M4 10V6q0-4 4-4t4 4v4" fill="none" stroke="#777" stroke-width="1.600"/><rect x="1" y="9" width="14" height="10" rx="1.500" fill="#666"/></svg>
    <span class="t3">Magnifier</span><div class="field spin mag">100%<i></i></div>
    <span class="t4">Rotation</span><div class="field spin rot">0.0 °<i></i></div>
    <span class="check"><svg><use href="#tick"/></svg></span><span class="t5">Render</span>
    <svg class="crs" viewBox="0 0 18 18"><circle cx="9" cy="9" r="7" fill="#bbb" stroke="#666"/><path d="M0 9h18M9 1v16M3 5q6 3 12 0M3 13q6-3 12 0" stroke="#666" fill="none"/><ellipse cx="9" cy="9" rx="3.500" ry="7.500" fill="none" stroke="#666"/></svg>
    <span class="t6">EPSG:4326</span>
    <svg class="msg" viewBox="0 0 20 18"><path d="M10 1c6 0 9 3 9 6.500 0 3-3 6-6 6.300L10 18l-.5-4C4 14 1 11 1 7.500S4 1 10 1z" fill="#555"/><circle cx="6" cy="7.500" r="1.200" fill="#fff"/><circle cx="10" cy="7.500" r="1.200" fill="#fff"/><circle cx="14" cy="7.500" r="1.200" fill="#fff"/></svg>
    <i class="size"></i>
  </footer>
</div>

<section class="window dialog">
  <header class="dtitle"><svg><use href="#rubem"/></svg><span>test — RUBEM Hydrological</span><em>?</em><svg class="close" viewBox="0 0 12 12"><path d="M.5.5l11 11M11.500.5l-11 11" stroke="#111"/></svg></header>
  <div class="buttons">
    <button class="def"><svg><use href="#new"/></svg><span><u>N</u>ew</span></button><button><svg><use href="#open"/></svg><span><u>O</u>pen</span></button><button><svg><use href="#save"/></svg><span><u>S</u>ave</span></button><button class="wide"><svg viewBox="0 0 18 18"><use href="#save"/><path d="M11 11h7v7h-7z" fill="#4e9a5a"/><path d="M12.500 16.500l4-4" stroke="#fff" stroke-width="1.500"/></svg><span>Save <u>A</u>s...</span></button><i></i><button class="ico"><svg><use href="#help"/></svg></button><i></i><button class="ico"><svg><use href="#puzzle"/></svg></button>
  </div>
  <div class="tabs"><span class="w1">Settings</span><span class="w2">Soil</span><span class="w3">Land Use</span><span class="w4">Climate</span><span class="w5">Parameters</span><span class="w6">Run</span><span class="w7">Results</span></div>
  <div class="pane">
    <h2>Map-series Resullts</h2>
    <div class="group">
      <p>Click to expand and double click to visualize in the map canvas</p>
      <div class="tree">
        <ul><li><b class="e"></b>Runoff [m³/s]</li><li class="kid sel"><span>Runoff00.001</span></li><li class="kid">Runoff00.002</li><li><b class="e"></b>Interception [mm]</li><li class="kid">Int00000.001</li><li class="kid">Int00000.002</li><li><b class="c"></b>Baseflow [mm]</li><li><b class="c"></b>Surface Runoff [mm]</li><li><b class="c"></b>ETa [mm]</li><li><b class="c"></b>Lateral Flow [mm]</li></ul>
        <div class="scroll s2"><i class="up"></i><i class="handle"></i><i class="track"></i><i class="down"></i></div>
      </div>
    </div>
    <h2 class="second">Time-series Results</h2>
    <div class="group">
      <p>Click to expand and double click to visualize</p>
      <div class="tree">
        <ul><li><b class="e"></b>Runoff [m³/s]</li><li class="kid">outRun.csv</li><li><b class="e"></b>Interception [mm]</li><li class="kid">outInt.csv</li><li><b class="e"></b>Baseflow [mm]</li><li class="kid">outBflow.csv</li><li><b class="c"></b>Surface Runoff [mm]</li><li><b class="c"></b>ETa [mm]</li><li><b class="c"></b>Lateral Flow [mm]</li><li><b class="c"></b>Recharge [mm]</li></ul>
        <div class="scroll s3"><i class="up"></i><i class="handle"></i><i class="track"></i><i class="down"></i></div>
      </div>
    </div>
  </div>
  <i class="size"></i>
</section>
</body>
</html>
```
FILE: styles.css
```
* { box-sizing: border-box; }
body { margin: 0; width: 1537px; height: 952px; overflow: hidden; background: #fff; position: relative; font: 14px/20px "Open Sans", "Noto Sans", sans-serif; color: #000; letter-spacing: .08px; white-space: nowrap; }
.defs { position: absolute; width: 0; height: 0; }
svg { display: block; flex: none; }
svg text { letter-spacing: 0; }
ul, h2, p { margin: 0; padding: 0; list-style: none; font-weight: normal; }
u { text-underline-offset: 2px; text-decoration-thickness: 1px; }

.window { position: absolute; background: #efefef; display: flex; flex-direction: column; }
.window > * { flex-shrink: 0; }
.main { left: 1px; top: 2px; width: 1225px; height: 946px; border: 1px solid #a8a8a8; box-shadow: 1px 1px 7px rgba(0,0,0,.4); }
.title { height: 37px; background: #fff; display: flex; align-items: center; padding: 1px 25px 0 9px; color: #8c8c8c; letter-spacing: 0; }
.logo { width: 20px; height: 20px; margin-right: 5px; }
.winbtns { width: 132px; height: 14px; margin-left: auto; margin-right: -2px; margin-bottom: 1px; }
.menu { height: 24px; border-bottom: 1px solid #c8c8c8; display: flex; gap: 14.700px; padding: 1px 0 0 11px; line-height: 24px; color: #8e8e8e; font-size: 14.500px; letter-spacing: -.12px; }

.bar { height: 31px; display: flex; align-items: center; padding-top: 2px; background: linear-gradient(#fbfbfb, #eee); border-bottom: 1px solid #b4b4b4; }
.bar svg { width: 18px; height: 18px; margin: 0 3.500px; }
.bar svg.on { width: 24px; height: 24px; margin: 0 .5px; padding: 2px; border: 1px solid #9c9c9c; border-radius: 3px; background: #dcdcdc; }
.off { opacity: .4; filter: grayscale(.5); }
.flip { transform: scaleX(-1); }
.grip { width: 18px; height: 16px; flex: none; background: linear-gradient(#bdbdbd 1px, transparent 1px) 9px 0 / 1px 3px repeat-y, linear-gradient(#bdbdbd 1px, transparent 1px) 12px 0 / 1px 3px repeat-y; }
.grip.first { width: 14.500px; background-position: 6px 0, 9px 0; }
.arr { width: 15px; flex: none; display: flex; justify-content: center; }
.arr::after { content: ""; border: 5px solid transparent; border-top-color: #4c4c4c; border-bottom: 0; }
.arr.dim::after { border-top-color: #9c9c9c; }
.sep { width: 8px; height: 14px; background: linear-gradient(#ccc, #ccc) 4px 0 / 1px 14px no-repeat; flex: none; }

.work { height: 757px; display: flex; }
.dock { width: 256px; display: flex; flex-direction: column; }
.dockhead { height: 23px; display: flex; align-items: center; padding: 2px 2px 0 4px; gap: 3px; flex: none; }
.dockhead span { flex: 1; letter-spacing: -.15px; }
.dockhead svg { width: 11px; height: 11px; margin-bottom: 3px; }
.tools { height: 28px; display: flex; align-items: center; gap: 9px; padding: 0 0 3px 8px; flex: none; }
.tools svg { width: 16px; height: 16px; }
.layertools { height: 27px; padding-bottom: 4px; }
.layertools .arr { width: 13px; margin: 0 -4px 0 -3px; }
.browser { height: 359px; display: flex; background: #fff; border: 1px solid #b0b0b0; border-left: 0; overflow: hidden; flex: none; }
.browser ul { flex: 1; padding-top: 1px; }
.browser li { height: 22px; display: flex; align-items: center; }
.browser li svg { width: 20px; height: 20px; margin: 0 6px 0 9px; }
b { width: 20px; display: flex; padding-left: 11px; flex: none; }
b.c::after { content: ""; border: 5px solid transparent; border-left-color: #4c4c4c; border-right: 0; }
b.e::after { content: ""; border: 5px solid transparent; border-top-color: #4c4c4c; border-bottom: 0; margin-left: -2px; }
.scroll { width: 17px; display: flex; flex-direction: column; border-left: 1px solid #b4b4b4; background: #e6e6e6; flex: none; }
.scroll .up, .scroll .down { height: 17px; background: #fafafa; display: flex; justify-content: center; align-items: center; flex: none; }
.scroll .up { border-bottom: 1px solid #b4b4b4; }
.scroll .down { border-top: 1px solid #b4b4b4; }
.scroll .up::after { content: ""; border: 5px solid transparent; border-bottom-color: #4c4c4c; border-top: 0; }
.scroll .down::after { content: ""; border: 5px solid transparent; border-top-color: #4c4c4c; border-bottom: 0; }
.scroll .handle { background: linear-gradient(90deg, #f2f2f2, #fff); border-bottom: 1px solid #b4b4b4; }
.scroll .track { flex: 1; }
.s1 .handle { height: 235px; }
.s2 .handle { height: 118px; }
.s3 .handle { height: 130px; }
.split { height: 6px; flex: none; width: 18px; margin-left: 120px; background: linear-gradient(90deg, #bdbdbd 1px, transparent 1px) 1px 3px / 3px 1px repeat-x; }
.layers { flex: 1; background: #fff; border: 1px solid #b0b0b0; border-left: 0; }
.layer, .legend { height: 22px; display: flex; align-items: center; }
.layer { margin-top: 1px; }
.legend { letter-spacing: -.08px; }
.layer b { width: 29px; }
.raster { width: 17px; height: 17px; margin: 0 7px 0 8px; }
.layer strong { letter-spacing: .4px; }
.check { width: 17px; height: 17px; border: 1px solid #aaa; background: #fff; }
.check svg { width: 15px; height: 15px; }
.legend i { width: 17px; height: 17px; background: #000; margin: 0 6px 0 54px; }
.legend i.none { background: none; }

.gutter { width: 7px; background: linear-gradient(#bdbdbd 1px, transparent 1px) 4px 0 / 1px 3px repeat-y; clip-path: inset(372px 0 367px 0); }
.canvas { width: 697px; border: 1px solid #b0b0b0; background: #fff; margin-top: 1px; }
.map { width: 695px; height: 754px; }
.rightdock { flex: 1; margin-top: 1px; background: #fff; border: 1px solid #b0b0b0; border-right: 0; }

.status { height: 33px; display: flex; align-items: center; padding-left: 4px; font-size: 12.500px; letter-spacing: -.3px; position: relative; }
.locate { width: 232px; height: 24px; border: 1px solid #b4b4b4; border-radius: 2px; background: #fff; color: #777; display: flex; align-items: center; padding-left: 8px; gap: 7px; letter-spacing: .1px; }
.locate svg { width: 13px; height: 13px; }
.field { height: 24px; border: 1px solid #b4b4b4; border-radius: 2px; background: #fff; display: flex; align-items: center; padding-left: 5px; flex: none; position: relative; letter-spacing: 0; }
.status span { flex: none; }
.t1 { margin-left: 65px; width: 65px; }
.coord { width: 107px; letter-spacing: .2px; }
.track-ic { width: 19px; height: 20px; margin-left: 4px; }
.t2 { margin-left: 14px; width: 34px; }
.combo { width: 92px; padding-left: 3px; }
.combo i { position: absolute; right: 9px; border: 5px solid transparent; border-top-color: #4c4c4c; border-bottom: 0; }
.lock { width: 16px; height: 20px; margin-left: 13px; }
.t3 { margin-left: 9px; width: 56px; }
.spin i { position: absolute; right: 0; top: 0; bottom: 0; width: 16px; border-left: 1px solid #b4b4b4; background: linear-gradient(#b4b4b4, #b4b4b4) 0 50% / 100% 1px no-repeat #f6f6f6; }
.spin i::before, .spin i::after { content: ""; position: absolute; left: 3px; border: 4.500px solid transparent; }
.spin i::before { top: 3px; border-bottom-color: #4c4c4c; border-top: 0; }
.spin i::after { bottom: 3px; border-top-color: #4c4c4c; border-bottom: 0; }
.mag { width: 92px; }
.t4 { margin-left: 10px; width: 56px; }
.rot { width: 88px; }
.status .check { margin-left: 7px; }
.t5 { margin-left: 6px; width: 58px; }
.crs { width: 20px; height: 19px; }
.t6 { margin-left: 4px; width: 84px; letter-spacing: 0; }
.msg { width: 21px; height: 19px; }
.size { position: absolute; right: 2px; bottom: 2px; width: 12px; height: 12px; background: radial-gradient(circle at 1px 1px, #bbb .7px, transparent 1px) 0 0 / 3px 3px; clip-path: polygon(100% 0, 100% 100%, 0 100%); }

.dialog { left: 961px; top: 108px; width: 570px; height: 710px; box-shadow: 0 3px 14px rgba(0,0,0,.45), 0 0 2px rgba(0,0,0,.4); }
.dtitle { height: 37px; background: #fff; display: flex; align-items: center; padding: 0 25px 0 9px; }
.dtitle span { letter-spacing: .28px; }
.dtitle svg:first-child { width: 20px; height: 20px; margin-right: 5px; }
.dtitle em { margin-left: auto; font: 15px "Open Sans", sans-serif; width: 55px; }
.dtitle .close { width: 12px; height: 12px; }
.buttons { display: flex; height: 27px; margin: 24px 0 0 24px; align-items: stretch; }
.buttons button { width: 80px; margin: 0 7px 0 0; border: 1px solid #a4a4a4; border-radius: 3px; background: linear-gradient(#fff, #f0f0f0); padding: 1px 0 0; display: flex; justify-content: center; align-items: center; }
.dialog button, .tabs, .dialog h2, .dialog p { font: 12.500px/16px "DejaVu Sans Condensed", "DejaVu Sans", sans-serif; font-stretch: condensed; letter-spacing: .03px; color: #000; }
.buttons svg { width: 19px; height: 19px; margin-bottom: 2px; }
.buttons button span { padding-top: 2px; }
.buttons .def { border-color: #1c2f66; background: linear-gradient(#fff, #d8d9e6); }
.buttons .wide { width: 90px; letter-spacing: -.1px; }
.buttons .ico { width: 68px; margin-right: 7px; }
.buttons i { width: 1px; background: #a8a8a8; margin: 0 9px 0 0; }
.buttons .ico + i { margin-right: 9px; margin-left: 0; }
.tabs { display: flex; align-items: flex-end; height: 30px; margin: 18px 0 0 33px; position: relative; z-index: 1; letter-spacing: 0; }
.tabs span { height: 28px; border: 1px solid #b0b0b0; border-right: 0; background: #e9e9e9; text-align: center; padding-top: 7px; border-radius: 2px 2px 0 0; }
.w1 { width: 76px; } .w2 { width: 51px; } .w3 { width: 82px; } .w4 { width: 73px; } .w5 { width: 96px; } .w6 { width: 52px; }
.tabs .w7 { width: 71px; height: 30px; background: #fff; border-right: 1px solid #b0b0b0; border-bottom: 0; padding-top: 8px; }
.pane { width: 543px; height: 560px; margin: -1px 0 0 13px; background: #fcfcfc; border: 1px solid #a8a8a8; padding: 14px 12px 0; }
.dialog h2 { height: 19px; }
.dialog .second { margin-top: 9px; height: 19px; }
.group { width: 516px; height: 243px; margin-left: 1px; background: #f9f9f9; border: 1px solid #e0e0e0; border-radius: 2px; padding: 13px 12px 0; }
.dialog p { height: 22px; }
.tree { width: 489px; height: 193px; border: 1px solid #b0b0b0; background: #fff; display: flex; overflow: hidden; letter-spacing: .03px; }
.tree ul { flex: 1; }
.tree li { height: 20px; display: flex; align-items: center; line-height: 18px; padding-top: 1px; }
.tree li b { width: 28px; padding-left: 10px; padding-bottom: 1px; }
.tree .kid { padding-left: 53px; letter-spacing: -.08px; }
.tree .sel { background: #0078d7; color: #dff0ff; padding: 0 0 0 50px; }
.sel span { background: linear-gradient(#1a86de, #0c7ddb); flex: 1; padding-left: 3px; line-height: 20px; height: 20px; padding-top: 1px; }
```
